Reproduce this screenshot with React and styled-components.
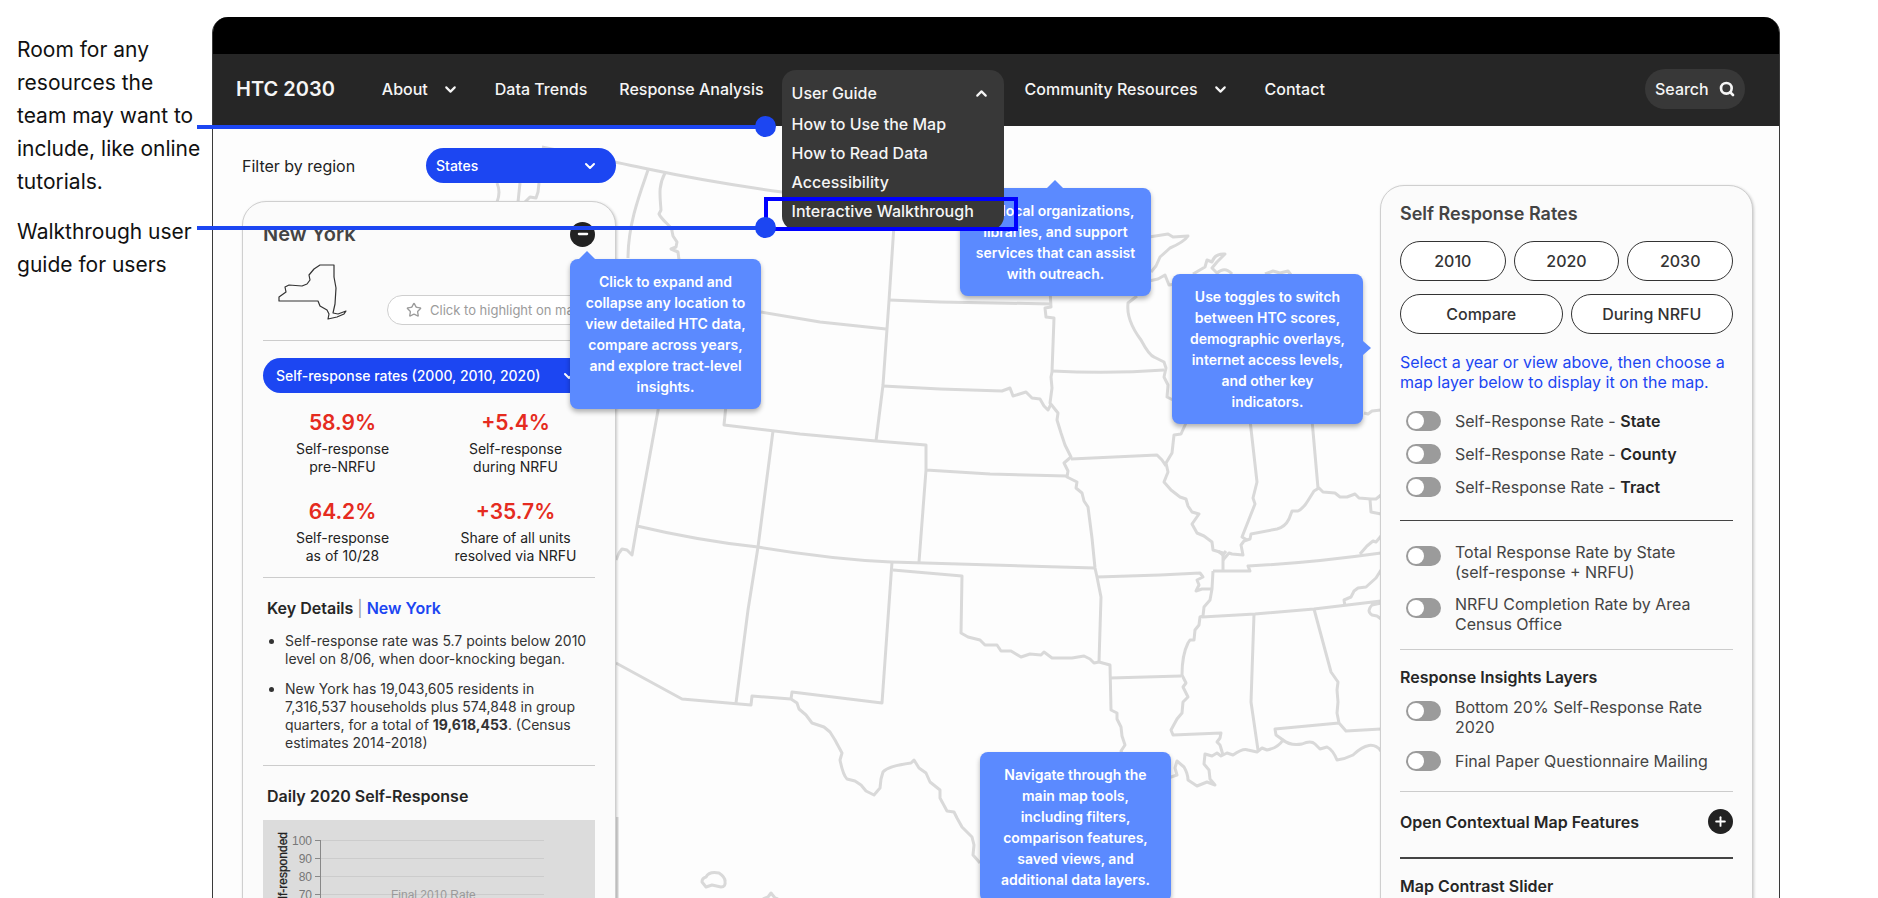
import React, { useState } from "react";
import styled, { createGlobalStyle, css } from "styled-components";
import { ChevronDown, ChevronUp, Minus, Plus, Search, Star } from "lucide-react";

const GlobalStyle = createGlobalStyle`
  * {
    box-sizing: border-box;
  }

  body {
    margin: 0;
    background: #ffffff;
    color: #222222;
    font-family: Inter, "Liberation Sans", sans-serif;
  }

  button,
  select {
    font-family: inherit;
  }

  h2,
  h3,
  p,
  ul {
    margin: 0;
    padding: 0;
  }
`;

const Page = styled.div`
  position: relative;
  display: flex;
  height: 100vh;
  padding: 17px 98px 0 0;
  overflow: hidden;
`;

const Notes = styled.aside`
  display: flex;
  flex-direction: column;
  flex: 0 0 212px;
  gap: 17px;
  padding: 16px 0 0 17px;
`;

const Note = styled.p`
  color: #111111;
  font-size: 21px;
  line-height: 33px;
  white-space: pre-line;
`;

const Connector = styled.div`
  position: absolute;
  z-index: 10;
  top: ${({ $top }) => $top}px;
  left: 197px;
  width: 569px;
  height: 4px;
  background: #1c46f2;

  &::after {
    content: "";
    position: absolute;
    top: -9px;
    right: -10px;
    width: 21px;
    height: 21px;
    border-radius: 50%;
    background: #1c46f2;
  }
`;

const Frame = styled.div`
  display: flex;
  flex: 1;
  flex-direction: column;
  min-width: 0;
  border: 1px solid #3a3a3a;
  border-top: 0;
  border-bottom: 0;
  border-radius: 16px 16px 0 0;
  background: #fdfdfd;
`;

const TitleBar = styled.div`
  flex: 0 0 37px;
  border-radius: 15px 15px 0 0;
  background: #000000;
`;

const Nav = styled.nav`
  display: flex;
  flex: 0 0 72px;
  align-items: center;
  gap: 32px;
  padding: 0 34px 2px 23px;
  background: #262626;
  color: #f5f5f5;
`;

const Brand = styled.span`
  margin-right: 15px;
  font-size: 20px;
  font-weight: 600;
  white-space: nowrap;
`;

const navText = css`
  border: 0;
  background: none;
  color: inherit;
  font-size: 16px;
  font-weight: 500;
  text-decoration: none;
  white-space: nowrap;
`;

const NavLink = styled.a`
  ${navText}
`;

const NavButton = styled.button`
  ${navText}
  display: flex;
  align-items: center;
  justify-content: space-between;
  gap: 14px;
  padding: 0 4px 0 0;
`;

const MenuSlot = styled.div`
  position: relative;
  z-index: 5;
  align-self: stretch;
  flex: 0 0 222px;
  margin: 0 -11px 0 -14px;
`;

const Menu = styled.div`
  position: absolute;
  top: 16px;
  left: 0;
  display: flex;
  flex-direction: column;
  width: 100%;
  padding: 8px 10px 4px;
  border-radius: 14px;
  background: #383838;

  ${NavButton} {
    height: 30px;
    margin-bottom: 2px;
  }

  ${NavLink} {
    line-height: 29px;
  }
`;

const Highlight = styled.div`
  position: absolute;
  right: -14px;
  bottom: -1px;
  left: -18px;
  height: 34px;
  border: 4px solid #0000ff;
`;

const SearchButton = styled.button`
  ${navText}
  display: flex;
  align-items: center;
  justify-content: space-between;
  width: 100px;
  height: 40px;
  margin-left: auto;
  padding: 0 10px;
  border-radius: 20px;
  background: #383838;
`;

const Body = styled.main`
  position: relative;
  display: flex;
  flex: 1;
  align-items: flex-start;
  justify-content: space-between;
  min-height: 0;
  padding: 0 26px 0 29px;
`;

const MapDrawing = styled.svg`
  position: absolute;
  top: 0;
  left: 0;
  width: 1566px;
  height: 772px;
  fill: none;
  stroke: #d9d9d9;
  stroke-width: 3;
  stroke-linejoin: round;
`;

const LeftColumn = styled.div`
  position: relative;
  z-index: 2;
  flex: 0 0 374px;
  padding-top: 22px;
`;

const FilterRow = styled.div`
  display: flex;
  align-items: center;
  justify-content: space-between;
  margin-bottom: 18px;
  font-size: 16px;
`;

const SelectBox = styled.div`
  position: relative;
  width: ${({ $width }) => $width};

  svg {
    position: absolute;
    top: 10px;
    right: 18px;
    color: #ffffff;
    pointer-events: none;
  }
`;

const Select = styled.select`
  width: 100%;
  height: 35px;
  padding: 0 14px 0 ${({ $indent }) => $indent}px;
  border: 0;
  border-radius: 18px;
  appearance: none;
  background: #1c46f2;
  color: #ffffff;
  font-size: 14px;
  font-weight: 500;
`;

const Panel = styled.section`
  border: 1px solid #cfcfcf;
  border-radius: 24px;
  background: #fbfbfb;
  box-shadow: 1px 1px 3px rgba(0, 0, 0, 0.2);
`;

const StatePanel = styled(Panel)`
  padding: 19px 20px;
`;

const PanelHead = styled.div`
  display: flex;
  align-items: center;
  justify-content: space-between;
`;

const PanelTitle = styled.h2`
  color: #444444;
  font-size: ${({ $large }) => ($large ? 20 : 18)}px;
  font-weight: 600;
  line-height: 26px;
`;

const CalloutAnchor = styled.div`
  position: relative;
  height: 25px;
`;

const RoundButton = styled.button`
  display: flex;
  align-items: center;
  justify-content: center;
  width: 25px;
  height: 25px;
  padding: 0;
  border: 0;
  border-radius: 50%;
  background: #222222;
  color: #ffffff;
`;

const arrows = {
  up: css`
    top: -8px;
    left: ${({ $arrow }) => $arrow}px;
    border-width: 0 8px 8px;
    border-bottom-color: #5b8aff;
  `,
  right: css`
    top: ${({ $arrow }) => $arrow}px;
    right: -8px;
    border-width: 7px 0 7px 8px;
    border-left-color: #5b8aff;
  `,
};

const Callout = styled.div`
  position: absolute;
  z-index: 3;
  top: ${({ $top }) => $top}px;
  left: ${({ $left }) => $left}px;
  width: 191px;
  padding: 12px 6px;
  border-radius: 8px;
  background: #5b8aff;
  box-shadow: 0 3px 5px rgba(0, 0, 0, 0.3);
  color: #ffffff;
  font-size: 14px;
  font-weight: 600;
  line-height: 21px;
  text-align: center;
  white-space: pre-line;

  &::before {
    content: "";
    position: absolute;
    border: 0 solid transparent;
    ${({ $side }) => arrows[$side]}
  }
`;

const StateSummary = styled.div`
  display: flex;
  align-items: flex-end;
  justify-content: space-between;
  padding: 17px 0 15px 15px;
`;

const StateOutline = styled.svg`
  width: 70px;
  height: 57px;
  margin-bottom: 4px;
  fill: none;
  stroke: #333333;
  stroke-width: 1.2;
  stroke-linejoin: round;
`;

const HighlightButton = styled.button`
  display: flex;
  align-items: center;
  gap: 8px;
  width: 208px;
  height: 30px;
  padding: 0 18px;
  border: 1px solid #cfcfcf;
  border-radius: 15px;
  background: #ffffff;
  color: #9b9b9b;
  font-size: 13px;
  white-space: nowrap;

  svg {
    flex: none;
  }
`;

const Divider = styled.hr`
  height: ${({ $thick }) => ($thick ? 2 : 1)}px;
  margin: 0;
  border: 0;
  background: ${({ $dark }) => ($dark ? "#444444" : "#cccccc")};
`;

const Stats = styled.div`
  display: grid;
  grid-template-columns: 1fr 1fr;
  gap: 24px 14px;
  padding: 18px 0 12px;
  text-align: center;
`;

const StatValue = styled.strong`
  display: block;
  margin-bottom: 5px;
  color: #e52b20;
  font-size: 21px;
  font-weight: 600;
  line-height: 24px;
`;

const StatLabel = styled.span`
  display: block;
  font-size: 14px;
  line-height: 18px;
  white-space: pre-line;
`;

const SectionTitle = styled.h3`
  color: #262626;
  font-size: 16px;
  font-weight: 600;
  line-height: 20px;

  span {
    color: #999999;
    font-weight: 400;
  }

  em {
    color: #1c46f2;
    font-style: normal;
  }
`;

const Details = styled.div`
  padding: 20px 0 13px 4px;
`;

const DetailList = styled.ul`
  display: flex;
  flex-direction: column;
  gap: 12px;
  margin-top: 14px;
  padding-left: 18px;
  color: #333333;
  font-size: 14px;
  line-height: 18px;
  white-space: pre-line;
`;

const ChartTitle = styled(SectionTitle)`
  padding: 20px 4px 14px;
`;

const Chart = styled.svg`
  display: block;
  width: 100%;
  height: 240px;
  background: #dcdcdc;
  font-family: "Liberation Sans", sans-serif;
  font-size: 12px;
`;

const LayersPanel = styled(Panel)`
  position: relative;
  z-index: 2;
  flex: 0 0 373px;
  margin-top: 59px;
  padding: 15px 19px 60px;
`;

const ButtonRow = styled.div`
  display: flex;
  gap: 8px;
  margin-top: ${({ $top }) => $top}px;
`;

const OutlineButton = styled.button`
  flex: 1;
  height: 40px;
  border: 1px solid #333333;
  border-radius: 20px;
  background: #ffffff;
  color: #333333;
  font-size: 16px;
  font-weight: 500;
`;

const Hint = styled.p`
  padding: 18px 0 19px;
  color: #1c46f2;
  font-size: 16px;
  line-height: 20px;
  white-space: pre-line;
`;

const ToggleList = styled.div`
  display: flex;
  flex-direction: column;
  gap: ${({ $gap }) => $gap}px;
  padding: ${({ $padding }) => $padding};
`;

const ToggleLabel = styled.label`
  display: flex;
  align-items: flex-start;
  gap: 14px;
  padding-left: 6px;
  color: #444444;
  font-size: 16px;
  line-height: 20px;
  white-space: pre-line;

  strong {
    color: #262626;
    font-weight: 600;
  }
`;

const Toggle = styled.input`
  flex: 0 0 35px;
  height: 20px;
  margin: ${({ $drop }) => $drop}px 0 0;
  padding: 2px;
  border-radius: 10px;
  appearance: none;
  background: #9b9b9b;

  &::before {
    content: "";
    display: block;
    width: 16px;
    height: 16px;
    border-radius: 50%;
    background: #ffffff;
  }

  &:checked {
    padding-left: 17px;
    background: #1c46f2;
  }
`;

const FeatureTitle = styled(SectionTitle)`
  margin-top: 17px;
`;

const FeatureRow = styled.div`
  display: flex;
  align-items: center;
  justify-content: space-between;
  padding: 17px 0 23px;
`;

const borders = [
  "M542 147 C570 153 616 162 648 169 C700 180 760 189 782 192 L1000 218",
  "M648 170 C642 188 628 222 628 258",
  "M665 173 C658 186 660 196 661 210 L659 214 C663 222 672 226 672 231 L673 236 L677 242 L676 247 L671 249 L678 252 L679 260",
  "M497 183 Q501 192 497 202 M520 183 L518 202 M539 183 L538 192 L536 198 L530 197 L525 202",
  "M894 225 L889 301 L883 385 L876 441",
  "M889 300 L940 302 L1051 304 M761 312 L820 322 L886 329",
  "M726 405 L724 425 L800 434 L876 441 L926 445 L926 470 L919 562 M926 470 L990 474 L1067 476",
  "M883 386 L940 389 L1002 391 L1010 388 L1013 396 L1026 392 L1032 398 L1040 399 L1044 406 L1048 410 L1051 404",
  "M1050 290 L1051 307 L1045 308 L1046 317 L1054 318 L1052 372 L1051 377 L1052 388 L1050 403 L1058 413 L1057 420 L1061 433 L1065 445 L1071 457 L1064 463 L1068 471 L1067 477 L1077 482 L1076 488 L1082 493 L1084 501 L1088 507 L1092 538 L1095 568 L1097 577 L1101 597 L1099 662",
  "M1052 371 Q1110 374 1164 370 M1071 459 L1157 455 L1162 460 L1166 466",
  "M1137 296 L1128 303 Q1126 320 1141 340 Q1149 355 1154 357 L1164 362 L1166 368 L1164 377 L1168 385 L1167 397 L1173 400",
  "M1186 423 L1181 434 L1174 435 L1172 453 L1166 463 L1168 472 L1164 482 L1171 490 L1180 497 L1186 499 L1188 506 L1192 512 L1199 514 L1192 524 L1197 533 L1204 536 L1212 542 L1213 550 L1223 553 L1223 570",
  "M1223 560 L1229 553 L1232 554 L1243 555 L1241 545 L1244 541 L1250 539 L1251 534 L1277 529 Q1285 527 1289 519 L1292 511 L1298 511 Q1304 508 1309 499 L1314 491 L1319 488 L1323 492 L1335 493 L1340 497 L1347 497 L1355 494 L1359 498 L1371 499 L1376 499 L1381 495",
  "M1370 499 L1371 512 L1381 514 M1218 551 L1223 555 L1226 551",
  "M1250 420 L1257 482 L1253 498 L1255 504 L1242 537 L1247 540 M1312 420 L1318 488",
  "M1364 413 L1368 414 L1372 411 L1381 410",
  "M1213 571 L1250 571 L1248 566 Q1310 563 1381 553 M1360 554 L1367 546 L1373 541 L1376 542 L1381 536",
  "M1381 570 L1376 578 L1366 587 L1358 588 L1354 591 L1351 597 L1344 600 L1345 606",
  "M1202 617 L1255 614 L1314 609 L1381 601 M1381 603 L1372 605 Q1366 611 1372 615 L1377 616 L1381 619",
  "M1097 577 L1160 575 L1200 573 L1203 577 L1197 580 L1199 585 L1196 591 L1202 589 L1212 589",
  "M1213 571 L1212 589 L1210 600 L1204 607 L1203 616 L1200 617 L1199 625 L1195 630 L1194 640 L1190 640 L1188 643 Q1182 655 1182 675 L1186 683 L1183 687 L1188 697 L1183 702 L1182 713 L1177 719 L1171 730 L1173 735 L1221 733 L1220 738 L1217 742 L1220 745 L1223 755",
  "M1110 678 L1181 676",
  "M1099 662 L1110 665 L1111 710 L1117 713 L1117 719 L1121 727 L1122 736 L1125 745 L1121 751 L1123 755",
  "M659 405 L637 526 L632 555 L627 550 L622 549 L619 553 L616 560 M637 526 Q700 541 758 547 Q830 559 891 562 L1095 568",
  "M773 431 L758 547 L748 610 L736 703",
  "M893 570 L962 576 L961 633 L968 637 L980 640 L985 645 L997 645 L1001 651 L1011 651 L1021 657 L1030 654 L1041 655 L1044 652 L1052 658 L1072 658 L1084 656 L1090 659 L1094 663 L1099 662",
  "M892 562 L882 703 L792 692 L791 699",
  "M616 663 L682 699 L751 705 L752 696 L791 699 L797 703 L799 709 L806 715 L812 723 L824 727 L830 732 L835 740 L842 753 L840 760 Q843 775 847 779 L855 781 L861 785 L866 791 L874 795 L880 788 L881 779 L883 772 Q888 766 911 763 L914 760 L919 768 L926 773 L930 782 L940 790 L940 798 L947 811 L954 812 L957 818 L962 827 L972 837 L974 845 L973 855 L980 863",
  "M1254 614 L1251 702 L1258 750",
  "M1314 609 L1331 672 L1338 682 L1337 690 L1338 702 L1337 713 L1339 723 L1346 731 L1381 729 M1339 723 L1275 729 L1276 735 L1283 740",
  "M1168 778 L1177 775 L1175 768 L1177 761 L1184 767 Q1188 774 1188 780 L1197 786 L1207 782 L1215 785 L1210 779 L1209 770 L1204 764 L1205 754 L1212 756 L1217 753 L1221 756 L1227 753 L1233 755 Q1243 748 1248 750 L1257 752 L1262 748 L1267 750 Q1278 748 1283 740 Q1290 746 1302 744 Q1311 740 1315 744 L1320 749 L1327 747 Q1333 750 1337 760 Q1345 759 1353 755 Q1371 738 1381 751",
  "M1149 237 L1168 234 L1173 237 L1188 236 Q1184 242 1170 248 L1160 257 L1156 266 L1151 272 M1149 281 L1158 279 L1165 275 L1169 285 L1175 284",
  "M1193 274 L1205 267 L1207 260 L1212 262 Q1215 253 1225 254 L1217 262 L1212 268 L1217 273 Q1225 266 1232 274 M1265 274 L1273 271 L1280 273 L1288 271 L1291 275",
  "M702 882 Q702 878 706 877 Q709 871 719 873 Q725 877 725 881 Q726 887 721 887 L712 885 L706 887 Z",
  "M763 899 L768 897 L771 893 L775 898 L778 899 M617 817 L617 900",
];

const stats = [
  ["58.9%", "Self-response\npre-NRFU"],
  ["+5.4%", "Self-response\nduring NRFU"],
  ["64.2%", "Self-response\nas of 10/28"],
  ["+35.7%", "Share of all units\nresolved via NRFU"],
];

const chartTicks = [100, 90, 80, 70];

const guideItems = [
  "How to Use the Map",
  "How to Read Data",
  "Accessibility",
  "Interactive Walkthrough",
];

function ToggleItem({ children, drop = 0 }) {
  const [on, setOn] = useState(false);

  return (
    <ToggleLabel>
      <Toggle
        type="checkbox"
        $drop={drop}
        checked={on}
        onChange={(e) => setOn(e.target.checked)}
      />
      <span>{children}</span>
    </ToggleLabel>
  );
}

function TopNav() {
  return (
    <Nav>
      <Brand>HTC 2030</Brand>
      <NavButton>
        About <ChevronDown size={17} strokeWidth={3} />
      </NavButton>
      <NavLink href="#trends">Data Trends</NavLink>
      <NavLink href="#analysis">Response Analysis</NavLink>
      <MenuSlot>
        <Menu>
          <NavButton>
            User Guide <ChevronUp size={17} strokeWidth={3} />
          </NavButton>
          {guideItems.map((item) => (
            <NavLink key={item} href="#guide">
              {item}
            </NavLink>
          ))}
          <Highlight />
        </Menu>
      </MenuSlot>
      <NavButton>
        Community Resources <ChevronDown size={17} strokeWidth={3} />
      </NavButton>
      <NavLink href="#contact">Contact</NavLink>
      <SearchButton>
        Search <Search size={16} strokeWidth={4} />
      </SearchButton>
    </Nav>
  );
}

function DailyChart() {
  return (
    <Chart>
      <text
        transform="translate(24 12) rotate(-90)"
        textAnchor="end"
        fill="#222222"
        stroke="#222222"
        strokeWidth="0.3"
      >
        % of households self-responded
      </text>
      <path d="M57.5 20 V240" stroke="#888888" />
      {chartTicks.map((tick, i) => (
        <g key={tick}>
          <path d={`M58 ${20.5 + i * 18} H281`} stroke="#cccccc" />
          <path d={`M52 ${20.5 + i * 18} H58`} stroke="#888888" />
          <text x="49" y={25 + i * 18} textAnchor="end" fill="#777777">
            {tick}
          </text>
        </g>
      ))}
      <text x="128" y="79" fill="#999999">
        Final 2010 Rate
      </text>
    </Chart>
  );
}

const StatSelect = styled(SelectBox)`
  margin-top: 17px;
`;

function StateCard() {
  return (
    <StatePanel>
      <PanelHead>
        <PanelTitle $large>New York</PanelTitle>
        <CalloutAnchor>
          <RoundButton aria-label="Collapse">
            <Minus size={14} strokeWidth={4} />
          </RoundButton>
          <Callout $top={37} $left={0} $side="up" $arrow={9}>
            {"Click to expand and\ncollapse any location to\nview detailed HTC data,\ncompare across years,\nand explore tract-level\ninsights."}
          </Callout>
        </CalloutAnchor>
      </PanelHead>
      <StateSummary>
        <StateOutline>
          <path d="M42 1 H56 L56 13 L58 24 L57 40 L55 49 L60 50 L68 47 L66 50 L59 53 L50 55 L51 50 L49 46 L42 42 L40 37 H1 V33 L8 28 L7 23 L11 21 L24 22 L29 20 L32 16 L31 11 L36 5 Z" />
        </StateOutline>
        <HighlightButton>
          <Star size={16} strokeWidth={2} /> Click to highlight on map
        </HighlightButton>
      </StateSummary>
      <Divider />
      <StatSelect $width="100%">
        <Select $indent={13} aria-label="Measure">
          <option>Self-response rates (2000, 2010, 2020)</option>
        </Select>
        <ChevronDown size={16} strokeWidth={3} />
      </StatSelect>
      <Stats>
        {stats.map(([value, label]) => (
          <div key={value}>
            <StatValue>{value}</StatValue>
            <StatLabel>{label}</StatLabel>
          </div>
        ))}
      </Stats>
      <Divider />
      <Details>
        <SectionTitle>
          Key Details <span>|</span> <em>New York</em>
        </SectionTitle>
        <DetailList>
          <li>
            {"Self-response rate was 5.7 points below 2010\nlevel on 8/06, when door-knocking began."}
          </li>
          <li>
            {"New York has 19,043,605 residents in\n7,316,537 households plus 574,848 in group\nquarters, for a total of "}
            <b>19,618,453</b>
            {". (Census\nestimates 2014-2018)"}
          </li>
        </DetailList>
      </Details>
      <Divider />
      <ChartTitle>Daily 2020 Self-Response</ChartTitle>
      <DailyChart />
    </StatePanel>
  );
}

function LayersCard() {
  return (
    <LayersPanel>
      <PanelTitle>Self Response Rates</PanelTitle>
      <ButtonRow $top={14}>
        <OutlineButton>2010</OutlineButton>
        <OutlineButton>2020</OutlineButton>
        <OutlineButton>2030</OutlineButton>
      </ButtonRow>
      <ButtonRow $top={13}>
        <OutlineButton>Compare</OutlineButton>
        <OutlineButton>During NRFU</OutlineButton>
      </ButtonRow>
      <Hint>
        {"Select a year or view above, then choose a\nmap layer below to display it on the map."}
      </Hint>
      <ToggleList $gap={13} $padding="0 0 23px">
        <ToggleItem>
          Self-Response Rate - <strong>State</strong>
        </ToggleItem>
        <ToggleItem>
          Self-Response Rate - <strong>County</strong>
        </ToggleItem>
        <ToggleItem>
          Self-Response Rate - <strong>Tract</strong>
        </ToggleItem>
      </ToggleList>
      <Divider $dark />
      <ToggleList $gap={12} $padding="21px 0 15px">
        <ToggleItem drop={4}>
          {"Total Response Rate by State\n(self-response + NRFU)"}
        </ToggleItem>
        <ToggleItem drop={4}>
          {"NRFU Completion Rate by Area\nCensus Office"}
        </ToggleItem>
      </ToggleList>
      <Divider />
      <FeatureTitle>Response Insights Layers</FeatureTitle>
      <ToggleList $gap={14} $padding="10px 0 20px">
        <ToggleItem drop={4}>
          {"Bottom 20% Self-Response Rate\n2020"}
        </ToggleItem>
        <ToggleItem>Final Paper Questionnaire Mailing</ToggleItem>
      </ToggleList>
      <Divider />
      <FeatureRow>
        <SectionTitle>Open Contextual Map Features</SectionTitle>
        <RoundButton aria-label="Expand">
          <Plus size={15} strokeWidth={3} />
        </RoundButton>
      </FeatureRow>
      <Divider $dark $thick />
      <FeatureTitle>Map Contrast Slider</FeatureTitle>
      <Callout $top={88} $left={-209} $side="right" $arrow={67}>
        {"Use toggles to switch\nbetween HTC scores,\ndemographic overlays,\ninternet access levels,\nand other key\nindicators."}
      </Callout>
    </LayersPanel>
  );
}

export default function App() {
  return (
    <>
      <GlobalStyle />
      <Page>
        <Notes>
          <Note>
            {"Room for any\nresources the\nteam may want to\ninclude, like online\ntutorials."}
          </Note>
          <Note>{"Walkthrough user\nguide for users"}</Note>
        </Notes>
        <Frame>
          <TitleBar />
          <TopNav />
          <Body>
            <MapDrawing viewBox="213 126 1566 772">
              {borders.map((d) => (
                <path key={d} d={d} />
              ))}
            </MapDrawing>
            <LeftColumn>
              <FilterRow>
                <label htmlFor="region">Filter by region</label>
                <SelectBox $width="190px">
                  <Select id="region" $indent={10}>
                    <option>States</option>
                  </Select>
                  <ChevronDown size={16} strokeWidth={3} />
                </SelectBox>
              </FilterRow>
              <StateCard />
            </LeftColumn>
            <Callout $top={62} $left={747} $side="up" $arrow={87}>
              {"For local organizations,\nlibraries, and support\nservices that can assist\nwith outreach."}
            </Callout>
            <Callout $top={626} $left={767}>
              {"Navigate through the\nmain map tools,\nincluding filters,\ncomparison features,\nsaved views, and\nadditional data layers."}
            </Callout>
            <LayersCard />
          </Body>
        </Frame>
        <Connector $top={125} />
        <Connector $top={226} />
      </Page>
    </>
  );
}
